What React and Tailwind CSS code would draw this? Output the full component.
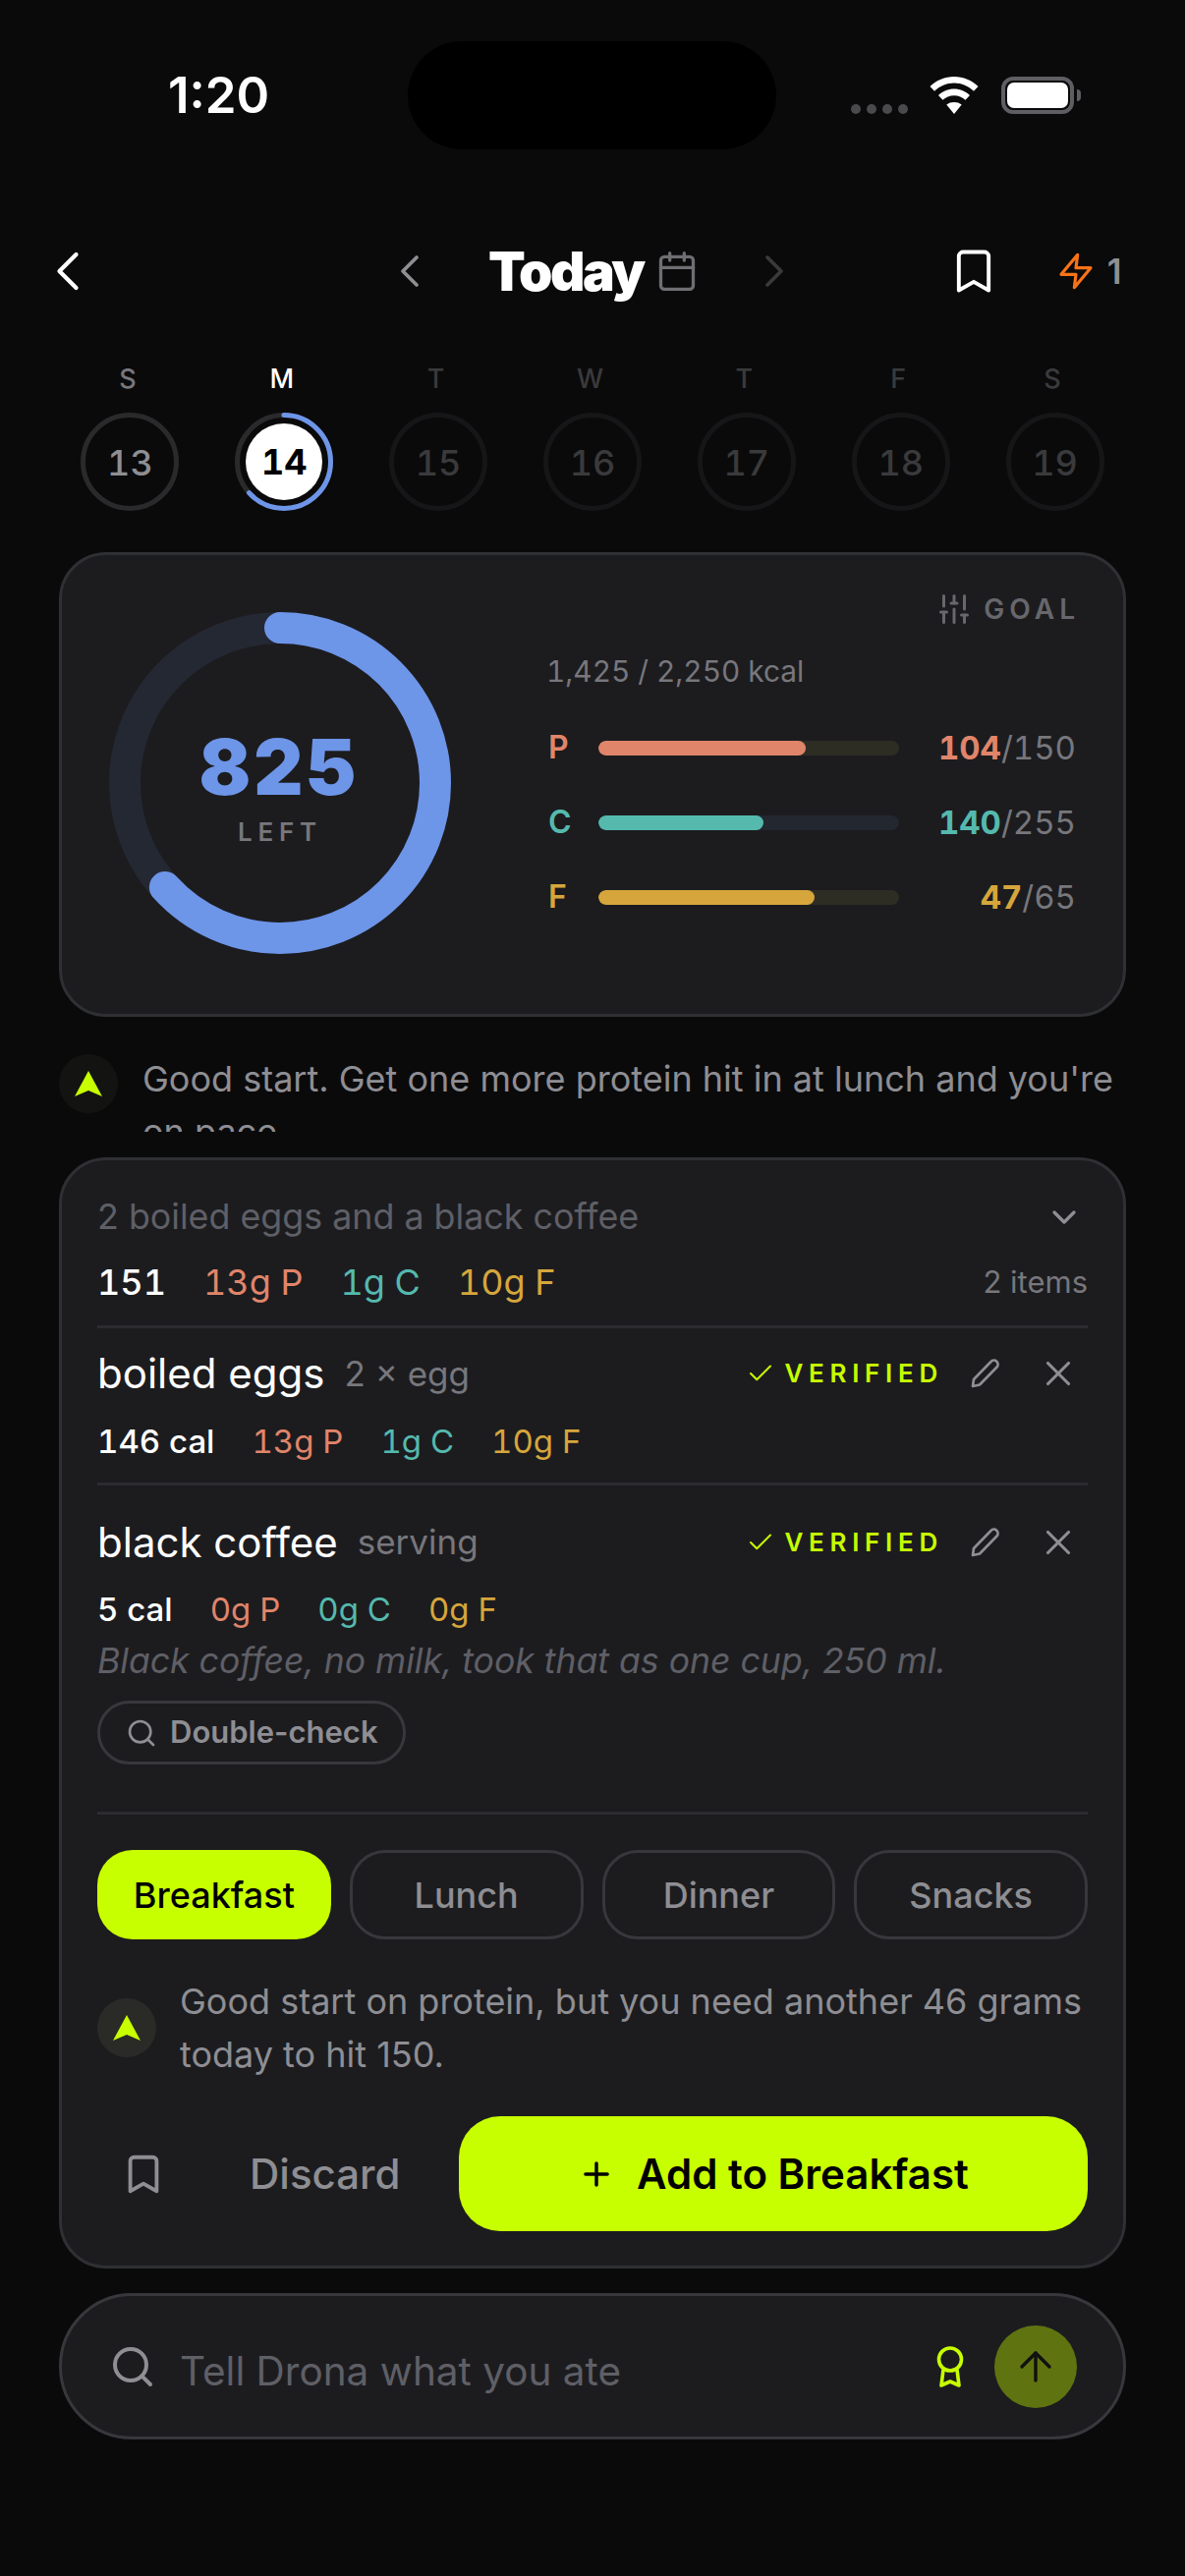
import {
  ArrowUp,
  Bookmark,
  Calendar,
  Check,
  ChevronDown,
  ChevronLeft,
  ChevronRight,
  Plus,
  Search,
  SlidersVertical,
  X,
} from "lucide-react";

const days = [
  { label: "S", num: 13, state: "past" },
  { label: "M", num: 14, state: "today" },
  { label: "T", num: 15 },
  { label: "W", num: 16 },
  { label: "T", num: 17 },
  { label: "F", num: 18 },
  { label: "S", num: 19 },
];

const macros = [
  { key: "P", value: 104, goal: 150, pct: 69, text: "text-[#e0856a]", fill: "bg-[#e0856a]", track: "bg-[#2e2d24]" },
  { key: "C", value: 140, goal: 255, pct: 55, text: "text-[#55b9ad]", fill: "bg-[#55b9ad]", track: "bg-[#23272f]" },
  { key: "F", value: 47, goal: 65, pct: 72, text: "text-[#d6a63c]", fill: "bg-[#d6a63c]", track: "bg-[#2e2d24]" },
];

function CoachDot({ className = "" }) {
  return (
    <div className={`flex h-[60px] w-[60px] shrink-0 items-center justify-center rounded-full ${className}`}>
      <svg viewBox="0 0 28 26" className="h-[26px] w-[28px]" fill="#c8ff00">
        <path d="M14 0 L28 26 L14 20 L0 26 Z" />
      </svg>
    </div>
  );
}

function StatusBar() {
  return (
    <div className="relative flex h-[194px] items-start justify-between pl-[171px] pr-[106px] pt-[66px]">
      <span className="text-[51px] leading-[62px] font-semibold text-white">1:20</span>
      <div className="absolute left-[415px] top-[42px] h-[110px] w-[375px] rounded-[55px] bg-black" />
      <div className="flex items-center pt-[12px]">
        <div className="flex gap-[6px] pt-[27px]">
          <span className="h-[10px] w-[10px] rounded-full bg-[#4a4a4c]" />
          <span className="h-[10px] w-[10px] rounded-full bg-[#4a4a4c]" />
          <span className="h-[10px] w-[10px] rounded-full bg-[#4a4a4c]" />
          <span className="h-[10px] w-[10px] rounded-full bg-[#4a4a4c]" />
        </div>
        <svg viewBox="0 0 50 38" className="ml-[22px] h-[38px] w-[50px]" fill="#fff">
          <path d="M25 0C15.500 0 7 3.800 0.500 10L5 14.800C10.300 9.700 17.300 6.500 25 6.500C32.700 6.500 39.700 9.700 45 14.800L49.500 10C43 3.800 34.500 0 25 0Z" />
          <path d="M25 12.500C18.800 12.500 13.200 15 9 19L13.500 23.800C16.500 21 20.500 19.200 25 19.200C29.500 19.200 33.500 21 36.500 23.800L41 19C36.800 15 31.200 12.500 25 12.500Z" />
          <path d="M25 26C22 26 19.600 26.800 17.300 28.500L25 38L32.700 28.500C30.400 26.800 28 26 25 26Z" />
        </svg>
        <div className="ml-[23px] flex items-center">
          <div className="h-[38px] w-[74px] rounded-[12px] border-[4px] border-[#5e5e63] p-[2px]">
            <div className="h-full w-full rounded-[7px] bg-white" />
          </div>
          <div className="ml-[3px] h-[12px] w-[4px] rounded-r-full bg-[#5e5e63]" />
        </div>
      </div>
    </div>
  );
}

function NavBar() {
  return (
    <div className="mt-[52px] flex h-[60px] items-center pl-[35px]">
      <ChevronLeft className="h-[68px] w-[68px] shrink-0 text-white" strokeWidth={1.5} />
      <ChevronLeft className="ml-[286px] h-[56px] w-[56px] shrink-0 text-[#8e8e93]" strokeWidth={1.6} />
      <span className="ml-[52px] text-[55px] leading-[60px] font-black tracking-[-0.045em] text-white">Today</span>
      <Calendar className="ml-[12px] h-[44px] w-[44px] shrink-0 text-[#6e6e73]" strokeWidth={1.8} />
      <ChevronRight className="ml-[49px] h-[56px] w-[56px] shrink-0 text-[#3a3a3c]" strokeWidth={1.6} />
      <Bookmark className="ml-[149px] h-[52px] w-[52px] shrink-0 text-white" strokeWidth={1.8} />
      <svg
        viewBox="0 0 24 24"
        fill="none"
        stroke="#f97316"
        strokeWidth="1.900"
        strokeLinejoin="round"
        strokeLinecap="round"
        className="ml-[58px] h-[40px] w-[40px] shrink-0"
      >
        <polygon points="13 2 3 14 12 14 11 22 21 10 12 10 13 2" />
      </svg>
      <span className="ml-[12px] text-[35px] leading-none font-semibold text-[#8e8e93]">1</span>
    </div>
  );
}

function DayRing({ day }) {
  if (day.state === "today") {
    return (
      <div className="relative flex h-[100px] w-[100px] items-center justify-center">
        <svg viewBox="0 0 100 100" className="absolute inset-0 h-full w-full -rotate-90">
          <circle cx="50" cy="50" r="47.500" fill="none" stroke="#2a2a2c" strokeWidth="5" />
          <circle
            cx="50"
            cy="50"
            r="47.500"
            fill="none"
            stroke="#6d95e8"
            strokeWidth="5"
            strokeLinecap="round"
            strokeDasharray="189 299"
          />
        </svg>
        <div className="flex h-[78px] w-[78px] items-center justify-center rounded-full bg-white text-[36px] font-bold text-black tabular-nums">
          14
        </div>
      </div>
    );
  }
  const past = day.state === "past";
  return (
    <div
      className={`flex h-[100px] w-[100px] items-center justify-center rounded-full border-[5px] pt-[1px] text-[36px] font-medium tabular-nums ${
        past ? "border-[#2a2a2c] text-[#8e8e93]" : "border-[#161618] text-[#3a3a3c]"
      }`}
    >
      {day.num}
    </div>
  );
}

function WeekStrip() {
  return (
    <div className="mt-[64px] grid grid-cols-7 px-[54px]">
      {days.map((d) => (
        <div key={d.num} className="flex flex-col items-center">
          <span
            className={`pr-[5px] text-[27px] leading-[32px] font-medium ${
              d.state === "today" ? "text-white" : d.state === "past" ? "text-[#77777c]" : "text-[#3a3a3c]"
            }`}
          >
            {d.label}
          </span>
          <div className="mt-[18px]">
            <DayRing day={d} />
          </div>
        </div>
      ))}
    </div>
  );
}

function CalorieRing() {
  return (
    <div className="relative flex h-[348px] w-[348px] shrink-0 items-center justify-center">
      <svg viewBox="0 0 348 348" className="absolute inset-0 h-full w-full -rotate-90">
        <circle cx="174" cy="174" r="158" fill="none" stroke="#242833" strokeWidth="32" />
        <circle
          cx="174"
          cy="174"
          r="158"
          fill="none"
          stroke="#6d95e8"
          strokeWidth="32"
          strokeLinecap="round"
          strokeDasharray="628 993"
        />
      </svg>
      <div className="flex flex-col items-center pt-[9px]">
        <span className="text-[78px] leading-[80px] font-black tracking-[0.05em] text-[#6d95e8] tabular-nums">825</span>
        <span className="mt-[10px] text-[26px] leading-[32px] font-semibold tracking-[0.22em] text-[#77777c]">LEFT</span>
      </div>
    </div>
  );
}

function MacroRow({ macro }) {
  return (
    <div className="flex h-[44px] items-center">
      <span className={`w-[51px] text-[32px] font-semibold ${macro.text}`}>{macro.key}</span>
      <div className={`h-[15px] w-[306px] overflow-hidden rounded-full ${macro.track}`}>
        <div className={`h-full rounded-full ${macro.fill}`} style={{ width: `${macro.pct}%` }} />
      </div>
      <div className="ml-auto text-[33px] leading-none text-[#77777c] tabular-nums">
        <span className={`font-bold ${macro.text}`}>{macro.value}</span>/{macro.goal}
      </div>
    </div>
  );
}

function SummaryCard() {
  return (
    <div className="relative mt-[42px] flex h-[473px] items-start rounded-[48px] border-[3px] border-[#2f3033] bg-[#1c1c1f] pl-[48px] pr-[48px] pt-[58px]">
      <CalorieRing />
      <div className="ml-[99px] flex-1">
        <div className="-mt-[21px] -mr-[4px] flex h-[36px] items-center justify-end gap-[12px]">
          <SlidersVertical className="h-[36px] w-[36px] text-[#67676c]" strokeWidth={2} />
          <span className="text-[28px] leading-none font-semibold tracking-[0.18em] text-[#67676c]">GOAL</span>
        </div>
        <p className="mt-[27px] -ml-[2px] text-[29.800px] leading-[36px] text-[#77777c] tabular-nums">1,425 / 2,250 kcal</p>
        <div className="mt-[38px] flex flex-col gap-[32px]">
          {macros.map((m) => (
            <MacroRow key={m.key} macro={m} />
          ))}
        </div>
      </div>
    </div>
  );
}

function MacroLine({ cal, p, c, f, size = "text-[33px]" }) {
  return (
    <div className={`flex items-center gap-[38px] tabular-nums ${size}`}>
      <span className="font-medium text-white">{cal}</span>
      <span className="text-[#e0856a]">{p}g P</span>
      <span className="text-[#55b9ad]">{c}g C</span>
      <span className="text-[#d6a63c]">{f}g F</span>
    </div>
  );
}

function PencilIcon() {
  return (
    <svg
      viewBox="0 0 30 30"
      fill="none"
      stroke="#8e8e93"
      strokeWidth="2.700"
      strokeLinejoin="round"
      className="ml-[28px] h-[30px] w-[30px]"
    >
      <path d="M2 28 L3 21 L20.500 3 a3.800 3.800 0 0 1 6 5.500 L9 26.500 Z" />
    </svg>
  );
}

function FoodHeader({ name, unit }) {
  return (
    <div className="flex h-[56px] items-center">
      <span className="text-[42px] leading-none text-white">{name}</span>
      <span className="ml-[20px] text-[35px] leading-none text-[#77777c]">{unit}</span>
      <Check className="ml-auto h-[30px] w-[30px] text-[#c8ff00]" strokeWidth={1.6} />
      <span className="ml-[9px] text-[26px] leading-none font-semibold tracking-[0.22em] text-[#c8ff00]">VERIFIED</span>
      <PencilIcon />
      <X className="ml-[38px] mr-[9px] h-[42px] w-[42px] text-[#8e8e93]" strokeWidth={1.8} />
    </div>
  );
}

function MealTabs() {
  return (
    <div className="mt-[36px] grid grid-cols-4 gap-[19px]">
      <button type="button" className="h-[91px] rounded-[36px] bg-[#c8ff00] text-[36px] font-medium text-black">
        Breakfast
      </button>
      {["Lunch", "Dinner", "Snacks"].map((t) => (
        <button
          key={t}
          type="button"
          className="h-[91px] rounded-[36px] border-[3px] border-[#38383c] text-[36px] font-medium text-[#8e8e93]"
        >
          {t}
        </button>
      ))}
    </div>
  );
}

function DraftCard() {
  return (
    <div className="mt-[26px] flex h-[1131px] flex-col rounded-[48px] border-[3px] border-[#2f3033] bg-[#1c1c1f] px-[36px] pt-[31px]">
      <div className="flex h-[54px] items-center justify-between">
        <span className="text-[35.800px] text-[#5f5f66]">2 boiled eggs and a black coffee</span>
        <ChevronDown className="mr-[4px] h-[40px] w-[40px] text-[#8e8e93]" strokeWidth={2} />
      </div>
      <div className="mt-[12px] flex h-[54px] items-center justify-between">
        <MacroLine cal="151" p={13} c={1} f={10} size="text-[36px]" />
        <span className="text-[31px] text-[#77777c]">2 items</span>
      </div>
      <div className="mt-[17px] h-[3px] bg-[#2c2c30]" />

      <div className="mt-[18px]">
        <FoodHeader name="boiled eggs" unit="2 × egg" />
        <div className="mt-[17px]">
          <MacroLine cal="146 cal" p={13} c={1} f={10} />
        </div>
      </div>
      <div className="mt-[16px] h-[3px] bg-[#2c2c30]" />

      <div className="mt-[30px]">
        <FoodHeader name="black coffee" unit="serving" />
        <div className="mt-[16px]">
          <MacroLine cal="5 cal" p={0} c={0} f={0} />
        </div>
        <p className="mt-[4px] text-[35.600px] leading-[48px] italic text-[#5f5f66]">
          Black coffee, no milk, took that as one cup, 250 ml.
        </p>
        <div className="mt-[16px] inline-flex h-[65px] items-center gap-[13px] rounded-full border-[3px] border-[#38383c] pl-[26px] pr-[25px] text-[31px] font-semibold text-[#8e8e93]">
          <Search className="h-[32px] w-[32px]" strokeWidth={2} />
          Double-check
        </div>
      </div>
      <div className="mt-[48px] h-[3px] bg-[#2c2c30]" />

      <MealTabs />

      <div className="mt-[36px] flex items-center gap-[24px]">
        <CoachDot className="bg-[#2a2a26]" />
        <p className="text-[36px] leading-[54px] text-[#8e8e93]">
          Good start on protein, but you need another 46 grams today to hit 150.
        </p>
      </div>

      <div className="mt-[36px] flex h-[117px] items-center">
        <Bookmark className="ml-[24px] h-[46px] w-[46px] text-[#8e8e93]" strokeWidth={2} />
        <span className="ml-[85px] text-[42px] font-medium text-[#8e8e93]">Discard</span>
        <button
          type="button"
          className="ml-auto flex h-[117px] w-[640px] items-center justify-center gap-[22px] rounded-[42px] bg-[#c8ff00] text-[42px] font-semibold text-black"
        >
          <Plus className="h-[38px] w-[38px]" strokeWidth={2.2} />
          Add to Breakfast
        </button>
      </div>
    </div>
  );
}

function ChatInput() {
  return (
    <div className="mt-[25px] flex h-[149px] items-center rounded-full border-[3px] border-[#38383c] bg-[#1c1c1f] pl-[48px] pr-[47px]">
      <Search className="h-[48px] w-[48px] text-[#8e8e93]" strokeWidth={2} />
      <span className="ml-[24px] mt-[12px] text-[40.500px] text-[#5f5f66]">Tell Drona what you ate</span>
      <svg
        viewBox="0 0 28 42"
        fill="none"
        stroke="#c8ff00"
        strokeWidth="3.600"
        strokeLinejoin="round"
        className="ml-auto h-[42px] w-[28px]"
      >
        <circle cx="14" cy="13.500" r="11.500" />
        <path d="M7 24 L5 40 L14 36 L23 40 L21 24" />
      </svg>
      <div className="ml-[31px] flex h-[84px] w-[84px] items-center justify-center rounded-full bg-[#5f7410]">
        <ArrowUp className="h-[48px] w-[48px] text-[#111]" strokeWidth={1.7} />
      </div>
    </div>
  );
}

export default function App() {
  return (
    <div className="min-h-[2622px] bg-[#0a0a0b] font-['Inter',sans-serif]">
      <StatusBar />
      <NavBar />
      <WeekStrip />
      <div className="px-[60px]">
        <SummaryCard />
        <div className="mt-[36px] flex h-[81px] gap-[25px] overflow-hidden">
          <CoachDot className="mt-[2px] bg-[#131411]" />
          <p className="text-[36px] leading-[54px] text-[#8e8e93]">
            Good start. Get one more protein hit in at lunch and you're on pace.
          </p>
        </div>
        <DraftCard />
        <ChatInput />
      </div>
    </div>
  );
}
